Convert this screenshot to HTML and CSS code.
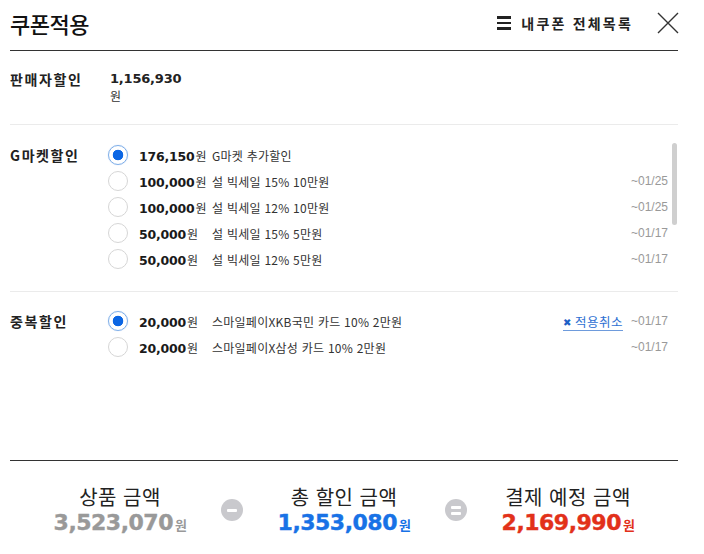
FILE: index.html
```html
<!DOCTYPE html>
<html lang="ko">
<head>
<meta charset="utf-8">
<title>쿠폰적용</title>
<link rel="stylesheet" href="styles.css">
</head>
<body>
<div class="modal">
  <header class="head">
    <h1 class="title">쿠폰적용</h1>
    <a class="mylist" href="#"><span class="burger"><i></i><i></i><i></i></span>내쿠폰 전체목록</a>
    <button class="close" type="button" aria-label="닫기">
      <svg width="22" height="22" viewBox="0 0 22 22"><path d="M1 1L21 21M21 1L1 21" stroke="#333" stroke-width="1.4" fill="none"/></svg>
    </button>
  </header>

  <section class="sec sec-seller">
    <div class="label">판매자할인</div>
    <div class="seller-val"><b>1,156,930</b><span>원</span></div>
  </section>

  <section class="sec sec-gmarket">
    <div class="label">G마켓할인</div>
    <ul class="list">
      <li class="row"><span class="radio on"></span><span class="amt"><b>176,150</b>원</span><span class="desc">G마켓 추가할인</span></li>
      <li class="row"><span class="radio"></span><span class="amt"><b>100,000</b>원</span><span class="desc">설 빅세일 15% 10만원</span><span class="date">~01/25</span></li>
      <li class="row"><span class="radio"></span><span class="amt"><b>100,000</b>원</span><span class="desc">설 빅세일 12% 10만원</span><span class="date">~01/25</span></li>
      <li class="row"><span class="radio"></span><span class="amt"><b>50,000</b>원</span><span class="desc">설 빅세일 15% 5만원</span><span class="date">~01/17</span></li>
      <li class="row"><span class="radio"></span><span class="amt"><b>50,000</b>원</span><span class="desc">설 빅세일 12% 5만원</span><span class="date">~01/17</span></li>
    </ul>
    <div class="thumb"></div>
  </section>

  <section class="sec sec-dup">
    <div class="label">중복할인</div>
    <ul class="list">
      <li class="row"><span class="radio on"></span><span class="amt"><b>20,000</b>원</span><span class="desc">스마일페이XKB국민 카드 10% 2만원</span><a class="cancel" href="#"><span class="x">✖</span>적용취소</a><span class="date">~01/17</span></li>
      <li class="row"><span class="radio"></span><span class="amt"><b>20,000</b>원</span><span class="desc">스마일페이X삼성 카드 10% 2만원</span><span class="date">~01/17</span></li>
    </ul>
  </section>

  <footer class="summary">
    <div class="col">
      <div class="cap">상품 금액</div>
      <div class="money gray">3,523,070<span class="won">원</span></div>
    </div>
    <div class="op"><span class="circle"><i class="bar"></i></span></div>
    <div class="col">
      <div class="cap">총 할인 금액</div>
      <div class="money blue">1,353,080<span class="won">원</span></div>
    </div>
    <div class="op"><span class="circle"><i class="bar b1"></i><i class="bar b2"></i></span></div>
    <div class="col">
      <div class="cap">결제 예정 금액</div>
      <div class="money red">2,169,990<span class="won">원</span></div>
    </div>
  </footer>
</div>
</body>
</html>
```

FILE: styles.css
```css
* { box-sizing: border-box; }
html, body { margin: 0; padding: 0; background: #fff; }
body {
  font-family: "Noto Sans CJK KR", "Noto Sans", sans-serif;
  color: #222;
  width: 704px;
  height: 554px;
  overflow: hidden;
}
ul { list-style: none; margin: 0; padding: 0; }
a { text-decoration: none; color: inherit; }

.modal {
  display: flex;
  flex-direction: column;
  height: 554px;
  padding: 0 26px 0 10px;
}

/* header */
.head {
  display: flex;
  align-items: center;
  height: 51px;
  border-bottom: 1px solid #333;
  padding-bottom: 4px;
}
.title {
  margin: 0;
  font-size: 22px;
  font-weight: 500;
  line-height: 30px;
  color: #111;
  letter-spacing: -0.5px;
  flex: 1;
}
.mylist {
  display: flex;
  align-items: center;
  font-size: 14px;
  font-weight: 700;
  color: #222;
  letter-spacing: 2.2px;
}
.burger {
  display: flex;
  flex-direction: column;
  gap: 3px;
  width: 14px;
  margin-right: 10px;
}
.burger i { display: block; height: 2.5px; background: #222; }
.close {
  border: 0;
  background: none;
  padding: 0;
  margin-left: 24px;
  margin-right: -1px;
  width: 22px;
  height: 22px;
  display: flex;
}

/* sections */
.sec {
  display: flex;
  position: relative;
  border-bottom: 1px solid #ebebeb;
}
.label {
  width: 98px;
  flex: none;
  font-size: 14px;
  font-weight: 700;
  line-height: 26px;
  color: #222;
  letter-spacing: 1.6px;
}
.sec-seller { padding: 15px 0 20px; }
.seller-val {
  padding-left: 2px;
  padding-top: 4px;
  display: flex;
  flex-direction: column;
}
.seller-val b {
  font-family: "DejaVu Sans", Verdana, sans-serif;
  font-size: 13px;
  line-height: 18px;
  color: #222;
  letter-spacing: -0.2px;
}
.seller-val span { font-size: 12px; line-height: 16px; color: #333; }

.sec-gmarket { padding: 17px 0 19px; }
.sec-dup { padding: 16px 0 0; flex: 1; border-bottom: 0; }

.list { flex: 1; padding-right: 10px; }
.row {
  display: flex;
  align-items: center;
  height: 26px;
  font-size: 12px;
  color: #333;
}
.radio {
  width: 20px;
  height: 20px;
  border-radius: 50%;
  border: 1px solid #d6d6d6;
  background: #fff;
  flex: none;
  margin-right: 11px;
}
.radio.on {
  border-color: #7eaee8;
  background: radial-gradient(circle, #0b66e4 0 5px, #fff 5.6px);
  box-shadow: 0 0 1px rgba(30,110,230,.4);
}
.amt { width: 73px; flex: none; font-size: 12px; color: #333; }
.amt b {
  font-family: "DejaVu Sans", Verdana, sans-serif;
  font-size: 12.5px;
  color: #1a1a1a;
  margin-right: 1px;
  letter-spacing: -0.2px;
}
.desc { flex: 1; white-space: nowrap; letter-spacing: 0.25px; }
.date {
  font-family: "Liberation Sans", Arial, sans-serif;
  font-size: 12px;
  color: #999;
  margin-left: 8px;
}
.cancel {
  color: #2e6fd2;
  font-size: 12.5px;
  line-height: 16px;
  border-bottom: 1px solid #6e9bdc;
  display: flex;
  align-items: center;
  letter-spacing: 0.5px;
  margin-top: 3px;
}
.cancel .x { font-size: 10px; margin-right: 3px; color: #1d5fc6; }

.thumb {
  position: absolute;
  left: 662px;
  top: 18px;
  width: 5px;
  height: 82px;
  border-radius: 3px;
  background: #cfcfcf;
}

/* summary */
.summary {
  height: 94px;
  border-top: 1px solid #333;
  display: flex;
  justify-content: center;
  padding-top: 23px;
}
.col {
  width: 180px;
  display: flex;
  flex-direction: column;
  align-items: center;
}
.cap {
  font-size: 20px;
  line-height: 26px;
  color: #222;
  letter-spacing: 0.5px;
}
.money {
  font-family: "DejaVu Sans", Verdana, sans-serif;
  font-weight: 700;
  font-size: 22px;
  line-height: 26px;
  letter-spacing: -0.5px;
  -webkit-text-stroke: 0.4px currentColor;
}
.won {
  font-family: "Noto Sans CJK KR", sans-serif;
  font-size: 13px;
  margin-left: 2px;
  -webkit-text-stroke: 0;
}
.gray { color: #999; }
.blue { color: #1872e6; }
.red { color: #e2311a; }
.op {
  width: 44px;
  display: flex;
  justify-content: center;
  padding-top: 15px;
}
.circle {
  width: 22px;
  height: 22px;
  border-radius: 50%;
  background: #c9c9cd;
  display: flex;
  flex-direction: column;
  align-items: center;
  justify-content: center;
  gap: 3px;
}
.bar { display: block; width: 10px; height: 3px; background: #fff; border-radius: 1px; }
```
